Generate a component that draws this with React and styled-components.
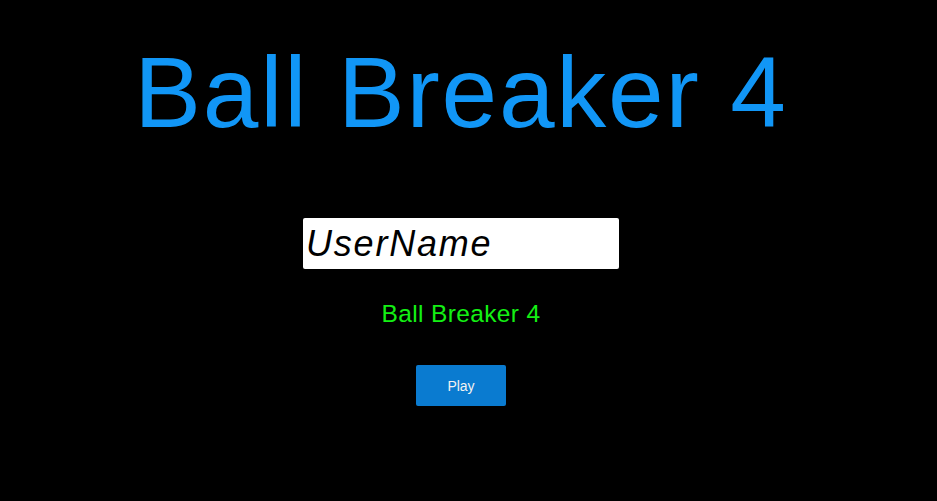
import React from "react";
import styled, { createGlobalStyle } from "styled-components";

const Global = createGlobalStyle`
  html, body { margin: 0; padding: 0; background: #000; }
  body { font-family: "Liberation Sans", Arial, sans-serif; }
`;

const Screen = styled.main`
  width: 922px;
  height: 501px;
  background: #000;
  display: flex;
  flex-direction: column;
  align-items: center;
  padding-top: 42px;
  box-sizing: border-box;
  overflow: hidden;
`;

const Title = styled.h1`
  margin: 0;
  font-family: "Liberation Sans", Arial, sans-serif;
  font-weight: 400;
  font-size: 100px;
  line-height: 100px;
  letter-spacing: 1.8px;
  color: #1196f6;
  white-space: nowrap;
`;

const NameInput = styled.input`
  margin-top: 76px;
  width: 316px;
  height: 51px;
  box-sizing: border-box;
  border: none;
  border-radius: 2px;
  background: #fff;
  padding: 0 0 0 3px;
  font-family: "Liberation Sans", Arial, sans-serif;
  font-style: italic;
  font-size: 36px;
  letter-spacing: 1.8px;
  color: #000;
  outline: none;
  &::placeholder {
    color: #000;
    font-style: italic;
  }
`;

const Subtitle = styled.div`
  margin-top: 33px;
  font-size: 24.5px;
  line-height: 24px;
  letter-spacing: 0.35px;
  color: #14f014;
  white-space: nowrap;
`;

const PlayButton = styled.button`
  margin-top: 39px;
  width: 90px;
  height: 41px;
  border: none;
  border-radius: 2px;
  background: #0a7bd0;
  color: #f2f2f2;
  font-family: "Liberation Sans", Arial, sans-serif;
  font-size: 14px;
  cursor: pointer;
`;

export default function App() {
  return (
    <>
      <Global />
      <Screen>
        <Title>Ball Breaker 4</Title>
        <NameInput placeholder="UserName" />
        <Subtitle>Ball Breaker 4</Subtitle>
        <PlayButton>Play</PlayButton>
      </Screen>
    </>
  );
}
